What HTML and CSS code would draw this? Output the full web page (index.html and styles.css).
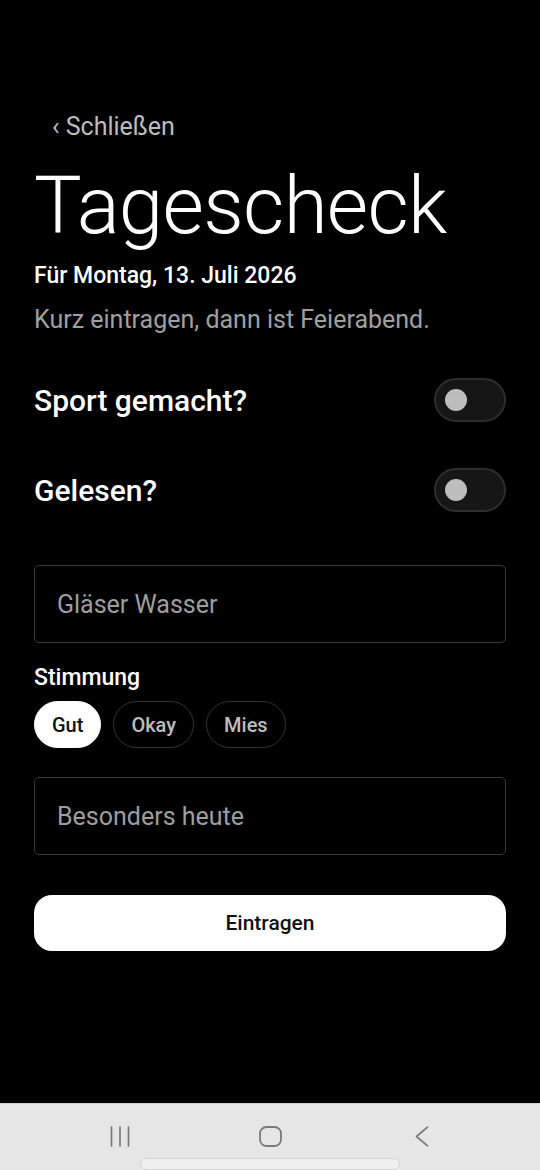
FILE: index.html
```html
<!DOCTYPE html>
<html lang="de">
<head>
    <meta charset="UTF-8">
    <meta name="viewport" content="width=device-width, initial-scale=1.0">
    <title>Tagescheck</title>
    <link rel="stylesheet" href="styles.css">
</head>
<body>
    <main class="page">
        <a class="close-link" href="#">‹ Schließen</a>
        <h1 class="title">Tagescheck</h1>
        <p class="date">Für Montag, 13. Juli 2026</p>
        <p class="subtitle">Kurz eintragen, dann ist Feierabend.</p>

        <div class="toggle-row">
            <span class="toggle-label">Sport gemacht?</span>
            <span class="switch"><span class="knob"></span></span>
        </div>
        <div class="toggle-row second">
            <span class="toggle-label">Gelesen?</span>
            <span class="switch"><span class="knob"></span></span>
        </div>

        <input class="field water" type="text" placeholder="Gläser Wasser">

        <div class="mood-label">Stimmung</div>
        <div class="chips">
            <button class="chip active">Gut</button>
            <button class="chip">Okay</button>
            <button class="chip">Mies</button>
        </div>

        <input class="field special" type="text" placeholder="Besonders heute">

        <button class="submit">Eintragen</button>
    </main>

    <nav class="system-nav">
        <div class="nav-icons">
            <svg class="icon-recent" width="20" height="21" viewBox="0 0 20 21">
                <path d="M1.5 1v19M10 1v19M18.5 1v19" stroke="#7a7a7a" stroke-width="1.7" stroke-linecap="round" fill="none"/>
            </svg>
            <svg class="icon-home" width="23" height="21" viewBox="0 0 23 21">
                <rect x="1" y="1" width="21" height="19" rx="6.5" stroke="#7a7a7a" stroke-width="1.8" fill="none"/>
            </svg>
            <svg class="icon-back" width="14" height="21" viewBox="0 0 14 21">
                <path d="M12.5 1.2L1.5 10.5l11 9.3" stroke="#7a7a7a" stroke-width="1.7" stroke-linecap="round" stroke-linejoin="round" fill="none"/>
            </svg>
        </div>
        <div class="handle"></div>
    </nav>
</body>
</html>
```

FILE: styles.css
```css
* {
    box-sizing: border-box;
}

html, body {
    margin: 0;
    padding: 0;
}

body {
    background: #000;
    color: #fff;
    font-family: Roboto, "Noto Sans", sans-serif;
    min-height: 100vh;
    display: flex;
    flex-direction: column;
}

.page {
    flex: 1;
    display: flex;
    flex-direction: column;
    padding: 112px 34px 0 34px;
}

.close-link {
    margin-left: 18px;
    font-size: 25px;
    line-height: 30px;
    color: #bdbdbd;
    text-decoration: none;
}

.title {
    margin: 24px 0 0 0;
    font-size: 80px;
    line-height: 80px;
    font-weight: 300;
    letter-spacing: -0.7px;
}

.date {
    margin: 16px 0 0 0;
    font-size: 23px;
    line-height: 27px;
    font-weight: 500;
}

.subtitle {
    margin: 16px 0 0 0;
    font-size: 25px;
    line-height: 30px;
    color: #a0a0a0;
}

.toggle-row {
    display: flex;
    align-items: center;
    justify-content: space-between;
    height: 44px;
    margin-top: 43px;
}

.toggle-row.second {
    margin-top: 46px;
}

.toggle-label {
    font-size: 30px;
    font-weight: 500;
}

.switch {
    width: 72px;
    height: 44px;
    border-radius: 22px;
    border: 2px solid #2e2e2e;
    background: #161616;
    display: flex;
    align-items: center;
    padding-left: 9px;
}

.knob {
    width: 22px;
    height: 22px;
    border-radius: 50%;
    background: #bdbdbd;
}

.field {
    display: block;
    width: 100%;
    height: 78px;
    margin: 0;
    padding: 0 22px;
    background: #000;
    border: 1px solid #383838;
    border-radius: 5px;
    font-family: Roboto, "Noto Sans", sans-serif;
    font-size: 25px;
    color: #fff;
    outline: none;
}

.field::placeholder {
    color: #9e9e9e;
}

.water {
    margin-top: 53px;
}

.mood-label {
    margin-top: 21px;
    font-size: 23px;
    line-height: 27px;
    font-weight: 500;
}

.chips {
    display: flex;
    gap: 12px;
    margin-top: 10px;
}

.chip {
    height: 47px;
    padding: 0 17px;
    border-radius: 24px;
    border: 1px solid #333;
    background: #000;
    color: #bdbdbd;
    font-family: Roboto, "Noto Sans", sans-serif;
    font-size: 20px;
    font-weight: 500;
}

.chip.active {
    background: #fff;
    border-color: #fff;
    color: #111;
}

.special {
    margin-top: 29px;
}

.submit {
    margin-top: 40px;
    height: 56px;
    width: 100%;
    border: none;
    border-radius: 18px;
    background: #fff;
    color: #111;
    font-family: Roboto, "Noto Sans", sans-serif;
    font-size: 21px;
    font-weight: 500;
}

.system-nav {
    height: 67px;
    background: #e6e6e6;
    border-top: 1px solid #cfcfcf;
    display: flex;
    flex-direction: column;
    align-items: center;
    overflow: hidden;
}

.nav-icons {
    display: flex;
    width: 100%;
    padding: 22px 0 0 110px;
    height: 43px;
}

.icon-home {
    margin-left: 129px;
}

.icon-back {
    margin-left: 133px;
}

.handle {
    margin-top: 11px;
    width: 260px;
    height: 20px;
    background: #efefef;
    border: 1px solid #d6d6d6;
    border-radius: 12px;
}
```
